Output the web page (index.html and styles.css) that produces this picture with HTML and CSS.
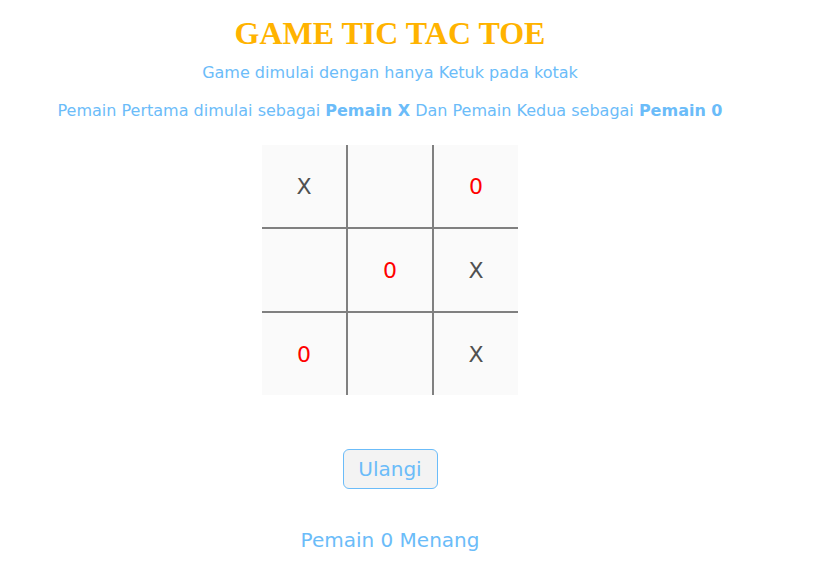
FILE: index.html
```html
<!DOCTYPE html>
<html>
<head>
<meta charset="utf-8">
<link rel="stylesheet" href="styles.css">
</head>
<body>
<div class="page">
  <h1 class="title">GAME TIC TAC TOE</h1>
  <p class="intro">Game dimulai dengan hanya Ketuk pada kotak</p>
  <p class="rules">Pemain Pertama dimulai sebagai <b>Pemain X</b> Dan Pemain Kedua sebagai <b>Pemain 0</b></p>
  <div class="board">
    <div class="cell x">X</div>
    <div class="cell"></div>
    <div class="cell o">0</div>
    <div class="cell"></div>
    <div class="cell o">0</div>
    <div class="cell x">X</div>
    <div class="cell o">0</div>
    <div class="cell"></div>
    <div class="cell x">X</div>
  </div>
  <button class="reset">Ulangi</button>
  <p class="result">Pemain 0 Menang</p>
</div>
</body>
</html>
```
FILE: styles.css
```css
html, body {
  margin: 0;
  padding: 0;
  background: #ffffff;
}
.page {
  width: 780px;
  display: flex;
  flex-direction: column;
  align-items: center;
  font-family: "DejaVu Sans", Verdana, sans-serif;
  color: #6bbcf9;
}
.title {
  font-family: "Liberation Serif", "Times New Roman", serif;
  font-weight: bold;
  font-size: 32px;
  color: #ffb300;
  margin: 15px 0 0 0;
  line-height: 36px;
}
.intro {
  font-size: 16px;
  margin: 12px 0 0 0;
  line-height: 19px;
}
.rules {
  font-size: 16px;
  margin: 19px 0 0 0;
  line-height: 19px;
}
.board {
  margin-top: 25px;
  display: grid;
  grid-template-columns: repeat(3, 84px);
  grid-template-rows: repeat(3, 82px);
  gap: 2px;
  background: #808080;
}
.cell {
  background: #fafafa;
  display: flex;
  align-items: center;
  justify-content: center;
  font-size: 22px;
}
.cell.x { color: #505050; }
.cell.o { color: #ff0000; }
.reset {
  margin-top: 54px;
  width: 95px;
  height: 40px;
  font-family: "DejaVu Sans", Verdana, sans-serif;
  font-size: 20px;
  color: #6bbcf9;
  background: #f3f3f3;
  border: 1px solid #6bbcf9;
  border-radius: 6px;
  padding: 0;
}
.result {
  font-size: 20px;
  margin: 39px 0 0 0;
  line-height: 24px;
}
```
